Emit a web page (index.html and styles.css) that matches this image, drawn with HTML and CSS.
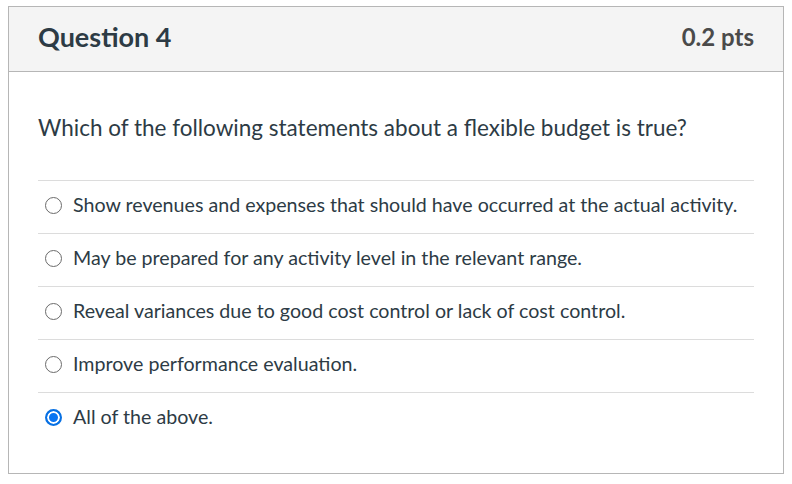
FILE: index.html
```html
<!DOCTYPE html>
<html>
<head>
<meta charset="utf-8">
<link rel="stylesheet" href="styles.css">
</head>
<body>
<div class="card">
  <div class="header">
    <div class="title">Question 4</div>
    <div class="pts">0.2 pts</div>
  </div>
  <div class="content">
    <div class="question">Which of the following statements about a flexible budget is true?</div>
    <div class="answers">
      <div class="answer"><span class="radio"></span><span class="label">Show revenues and expenses that should have occurred at the actual activity.</span></div>
      <div class="answer"><span class="radio"></span><span class="label">May be prepared for any activity level in the relevant range.</span></div>
      <div class="answer"><span class="radio"></span><span class="label">Reveal variances due to good cost control or lack of cost control.</span></div>
      <div class="answer"><span class="radio"></span><span class="label">Improve performance evaluation.</span></div>
      <div class="answer"><span class="radio checked"></span><span class="label">All of the above.</span></div>
    </div>
  </div>
</div>
</body>
</html>
```

FILE: styles.css
```css
html, body {
  margin: 0;
  padding: 0;
  background: #ffffff;
}
body {
  font-family: Lato, "Liberation Sans", sans-serif;
  color: #2d3b45;
}
.card {
  margin: 6px 0 0 8px;
  width: 776px;
  height: 468px;
  box-sizing: border-box;
  border: 1px solid #b6b6b6;
}
.header {
  height: 65px;
  box-sizing: border-box;
  background: #f4f4f4;
  border-bottom: 1px solid #b6b6b6;
  display: flex;
  align-items: center;
  justify-content: space-between;
  padding: 0 29px 4px;
}
.title {
  font-size: 27px;
  line-height: 32px;
  font-weight: 700;
  color: #2d3b45;
}
.pts {
  font-size: 24px;
  line-height: 28px;
  font-weight: 700;
  color: #4a4a4a;
}
.content {
  padding: 0 29px;
}
.question {
  font-size: 22.5px;
  line-height: 26px;
  padding-top: 43px;
  height: 65px;
}
.answer {
  height: 53px;
  box-sizing: border-box;
  border-top: 1px solid #dcdcdc;
  display: flex;
  align-items: flex-start;
  padding: 14px 0 0 7px;
  font-size: 19.65px;
}
.radio {
  width: 17px;
  height: 17px;
  box-sizing: border-box;
  border: 1.5px solid #6b6b6b;
  border-radius: 50%;
  margin: 2px 11px 0 0;
  flex: none;
}
.radio.checked {
  border: 2px solid #0770e3;
  background: #0a75f2;
  box-shadow: inset 0 0 0 2px #ffffff;
}
.label {
  color: #2d3b45;
  line-height: 20px;
}
```
